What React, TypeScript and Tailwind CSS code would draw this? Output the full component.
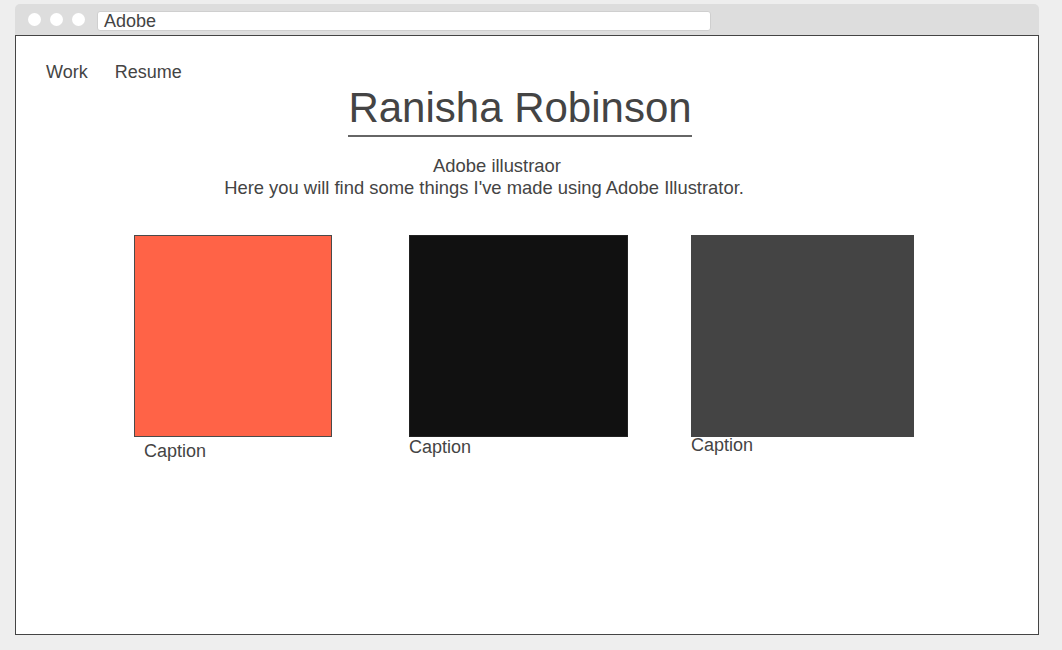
const works = [
  { color: "bg-[#ff6347]", box: "w-[198px] border border-[#4a4a4a]", wrap: "ml-[118px]", caption: "ml-[10px] mt-[4px]" },
  { color: "bg-[#111111]", box: "w-[219px] border border-[#222]", wrap: "ml-[77px]", caption: "mt-[0px]" },
  { color: "bg-[#444444]", box: "w-[223px]", wrap: "ml-[63px]", caption: "-mt-[2px]" },
]

export default function App() {
  return (
    <div
      className="w-[1062px] h-[650px] bg-[#eeeeee] pt-[4px] pl-[15px] text-[#444]"
      style={{ fontFamily: '"Liberation Sans", Arial, sans-serif' }}
    >
      <div className="w-[1024px]">
        {/* Browser chrome */}
        <div className="h-[32px] bg-[#dddddd] rounded-t-[5px] flex items-center pl-[13px] gap-[9px] border-b border-[#444]">
          <span className="w-[13px] h-[13px] rounded-full bg-white" />
          <span className="w-[13px] h-[13px] rounded-full bg-white" />
          <span className="w-[13px] h-[13px] rounded-full bg-white" />
          <div className="w-[614px] h-[20px] bg-white rounded-[3px] border border-[#cfcfcf] ml-[3px] mt-[2px] flex items-center pl-[6px] text-[18px] leading-none">
            Adobe
          </div>
        </div>

        {/* Page */}
        <div className="h-[599px] bg-white border-x border-b border-[#444]">
          <nav className="flex gap-[27px] pl-[30px] pt-[25px] text-[18px] leading-[22px]">
            <a>Work</a>
            <a>Resume</a>
          </nav>

          <div className="flex justify-center pr-[14px] mt-[1px]">
            <h1 className="text-[42px] leading-[48px] pb-[3px] border-b-2 border-[#666]">Ranisha Robinson</h1>
          </div>

          <div className="mt-[18px] text-[18.4px] leading-[22px] text-center pr-[86px]">
            <p className="pl-[26px]">Adobe illustraor</p>
            <p>Here you will find some things I&apos;ve made using Adobe Illustrator.</p>
          </div>

          <div className="flex items-start mt-[36px]">
            {works.map((w, i) => (
              <div key={i} className={w.wrap}>
                <div className={`h-[202px] ${w.box} ${w.color}`} />
                <p className={`text-[18px] leading-[20px] ${w.caption}`}>Caption</p>
              </div>
            ))}
          </div>
        </div>
      </div>
    </div>
  )
}
